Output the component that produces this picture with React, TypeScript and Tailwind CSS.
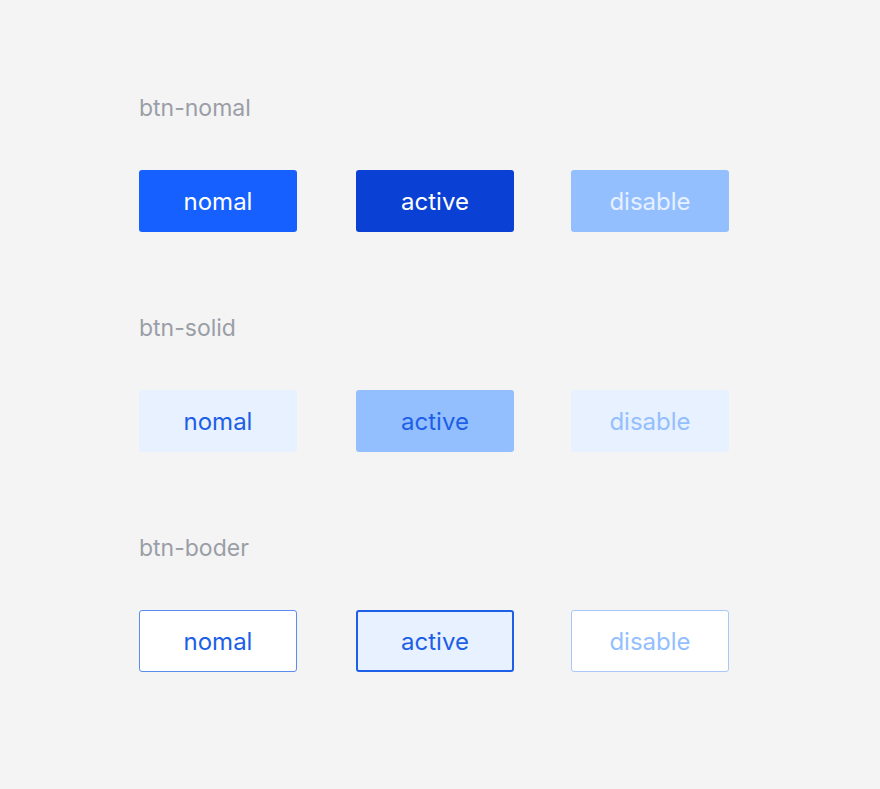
const font = { fontFamily: 'Inter, "Noto Sans", sans-serif' }

type Kind = 'nomal' | 'solid' | 'boder'

const styles: Record<Kind, { nomal: string; active: string; disable: string }> = {
  nomal: {
    nomal: 'bg-[#1660ff] text-white',
    active: 'bg-[#0b40d4] text-white',
    disable: 'bg-[#94bfff] text-[#e6f0ff]',
  },
  solid: {
    nomal: 'bg-[#e8f1ff] text-[#1d5fe6]',
    active: 'bg-[#94bfff] text-[#1d5fe6]',
    disable: 'bg-[#e8f1ff] text-[#94bfff]',
  },
  boder: {
    nomal: 'bg-white border border-[#5b8cf0] text-[#1d5fe6]',
    active: 'bg-[#e8f1ff] border-2 border-[#1d5fe6] text-[#1d5fe6]',
    disable: 'bg-white border border-[#a9c7f7] text-[#94bfff]',
  },
}

function Row({ kind }: { kind: Kind }) {
  const s = styles[kind]
  return (
    <div className="flex flex-col">
      <div className="text-[23px] leading-[28px] text-[#9a9ea6]">btn-{kind}</div>
      <div className="mt-[48px] flex">
        <div className={`flex h-[62px] w-[158px] items-center justify-center rounded-[3px] pt-[1px] text-[24px] ${s.nomal}`}>
          nomal
        </div>
        <div className={`ml-[59px] flex h-[62px] w-[158px] items-center justify-center rounded-[3px] pt-[1px] text-[24px] ${s.active}`}>
          active
        </div>
        <div className={`ml-[57px] flex h-[62px] w-[158px] items-center justify-center rounded-[3px] pt-[1px] text-[24px] ${s.disable}`}>
          disable
        </div>
      </div>
    </div>
  )
}

export default function App() {
  return (
    <div className="min-h-[789px] w-[880px] bg-[#f4f4f5] pl-[139px] pt-[94px]" style={font}>
      <div className="flex flex-col gap-[82px]">
        <Row kind="nomal" />
        <Row kind="solid" />
        <Row kind="boder" />
      </div>
    </div>
  )
}
